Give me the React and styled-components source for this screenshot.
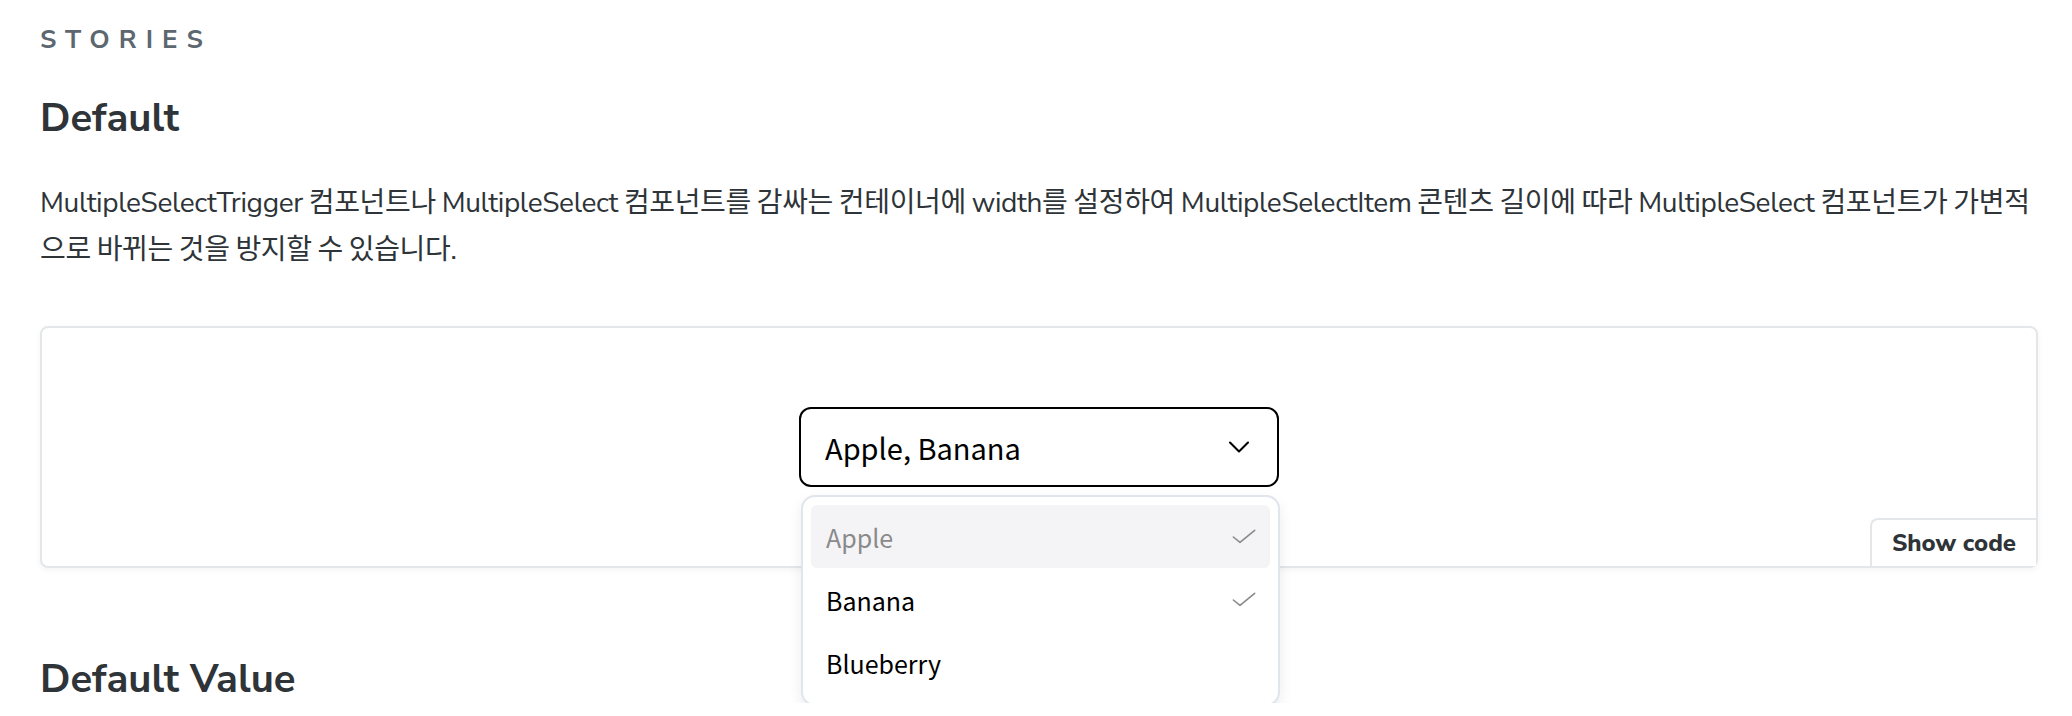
import React from "react";
import styled, { createGlobalStyle } from "styled-components";

const GlobalStyle = createGlobalStyle`
  html, body {
    margin: 0;
    padding: 0;
    background: #ffffff;
  }
  body {
    font-family: "Nunito Sans", Lato, "Noto Sans CJK KR", sans-serif;
    -webkit-font-smoothing: antialiased;
  }
  * { box-sizing: border-box; }
`;

const Docs = styled.main`
  width: 1998px;
  margin-left: 40px;
  display: flex;
  flex-direction: column;
`;

const StoriesLabel = styled.h2`
  margin: 24px 0 0;
  font-size: 26px;
  line-height: 32px;
  font-weight: 700;
  letter-spacing: 0.35em;
  text-transform: uppercase;
  color: #5c6770;
`;

const StoryTitle = styled.h3`
  margin: ${(p) => p.$top}px 0 0;
  font-size: 40px;
  line-height: 48px;
  font-weight: 700;
  color: #2e3438;
`;

const Description = styled.p`
  margin: 38px 0 0;
  font-size: 28px;
  line-height: 47px;
  letter-spacing: -0.35px;
  word-spacing: -1px;
  color: #2e3438;
  font-family: "Nunito Sans", Lato, "Noto Sans CJK KR", sans-serif;
`;

const Preview = styled.section`
  position: relative;
  margin-top: 52px;
  border: 2px solid #e4e7ea;
  border-radius: 8px;
  background: #fff;
  box-shadow: 0 2px 6px rgba(0, 0, 0, 0.05);
  padding: 79px 0;
  display: flex;
  justify-content: center;
`;

const SelectRoot = styled.div`
  position: relative;
  width: 480px;
  font-family: "Noto Sans CJK KR", "Noto Sans", sans-serif;
  z-index: 2;
`;

const Trigger = styled.button`
  width: 100%;
  height: 80px;
  border: 2px solid #000;
  border-radius: 12px;
  background: #fff;
  display: flex;
  align-items: center;
  justify-content: space-between;
  padding: 0 20px 0 24px;
  font-family: inherit;
  font-size: 29px;
  color: #000;
  cursor: pointer;
`;

const Popup = styled.ul`
  position: absolute;
  top: calc(100% + 8px);
  left: 2px;
  width: 479px;
  margin: 0;
  list-style: none;
  padding: 8px 8px 10px;
  background: #fff;
  border: 2px solid #e1e5ec;
  border-radius: 14px;
  box-shadow: 0 6px 14px rgba(0, 0, 0, 0.08);
`;

const Item = styled.li`
  height: 63px;
  display: flex;
  align-items: center;
  justify-content: space-between;
  padding: 0 10px 0 15px;
  border-radius: 6px;
  font-size: 25px;
  color: ${(p) => (p.$active ? "#8a8a8a" : "#000")};
  background: ${(p) => (p.$active ? "#f4f4f6" : "transparent")};
`;

const ShowCode = styled.button`
  position: absolute;
  right: 0;
  bottom: 0;
  height: 48px;
  padding: 0 20px;
  border: none;
  border-top: 2px solid #e4e7ea;
  border-left: 2px solid #e4e7ea;
  border-radius: 8px 0 0 0;
  background: #fff;
  font-family: "Nunito Sans", Lato, sans-serif;
  font-size: 24px;
  font-weight: 800;
  color: #2e3438;
  cursor: pointer;
`;

const Chevron = () => (
  <svg width="36" height="36" viewBox="0 0 24 24" fill="none" stroke="#000" strokeWidth="1.4" strokeLinecap="round" strokeLinejoin="round">
    <polyline points="6 9 12 15 18 9" />
  </svg>
);

const Check = () => (
  <svg width="32" height="32" viewBox="0 0 24 24" fill="none" stroke="#8a8a8a" strokeWidth="1.2" strokeLinecap="round" strokeLinejoin="round">
    <polyline points="20 7 9 16 4 12" />
  </svg>
);

const items = [
  { label: "Apple", selected: true, active: true },
  { label: "Banana", selected: true },
  { label: "Blueberry", selected: false },
];

export default function App() {
  return (
    <>
      <GlobalStyle />
      <Docs>
        <StoriesLabel>Stories</StoriesLabel>
        <StoryTitle $top={38}>Default</StoryTitle>
        <Description>
          MultipleSelectTrigger 컴포넌트나 MultipleSelect 컴포넌트를 감싸는 컨테이너에 width를 설정하여 MultipleSelectItem 콘텐츠 길이에 따라 MultipleSelect 컴포넌트가 가변적으로 바뀌는 것을 방지할 수 있습니다.
        </Description>
        <Preview>
          <SelectRoot>
            <Trigger>
              <span>Apple, Banana</span>
              <Chevron />
            </Trigger>
            <Popup>
              {items.map((it) => (
                <Item key={it.label} $active={it.active}>
                  <span>{it.label}</span>
                  {it.selected && <Check />}
                </Item>
              ))}
            </Popup>
          </SelectRoot>
          <ShowCode>Show code</ShowCode>
        </Preview>
        <StoryTitle $top={87}>Default Value</StoryTitle>
      </Docs>
    </>
  );
}
